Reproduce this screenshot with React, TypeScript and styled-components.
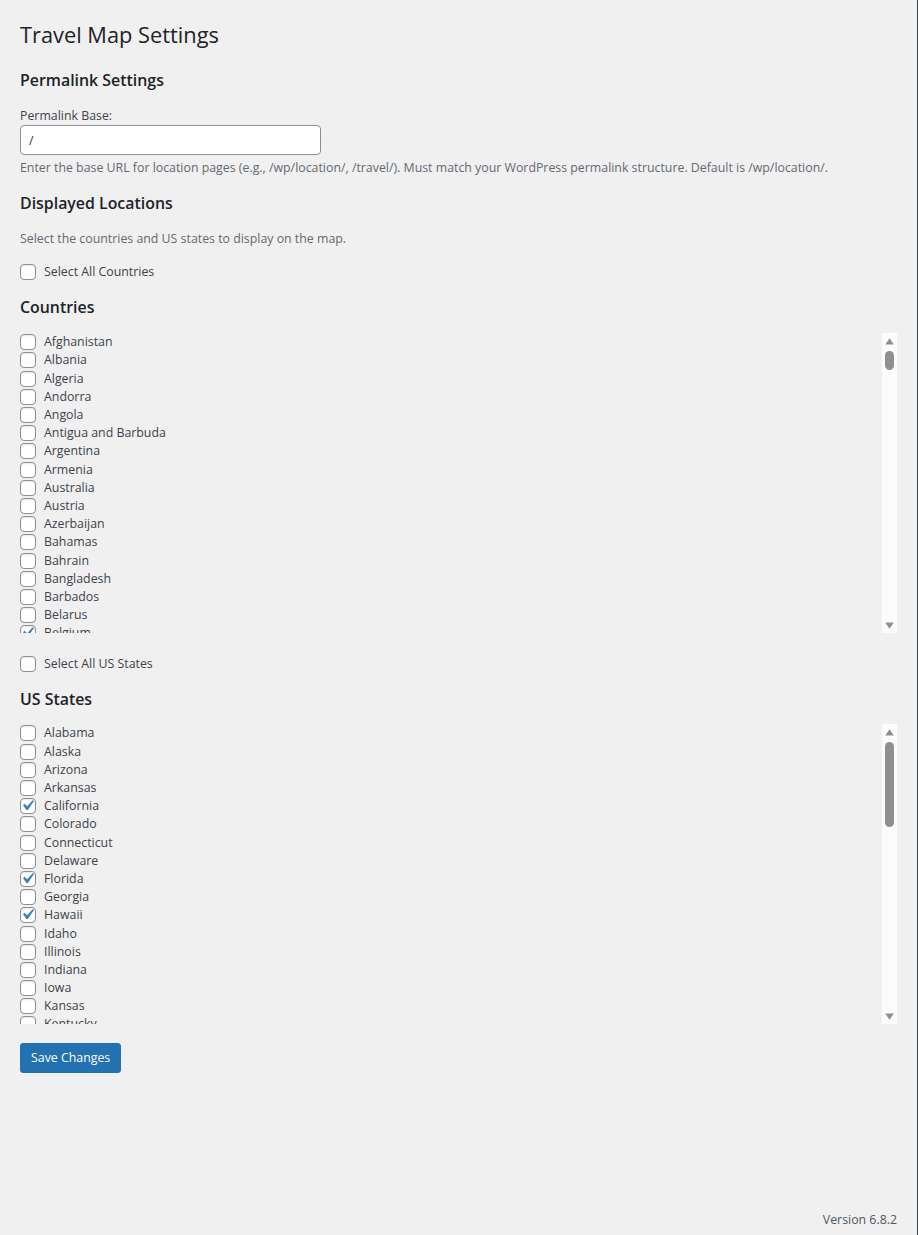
import React from "react";
import styled, { createGlobalStyle } from "styled-components";

const GlobalStyle = createGlobalStyle`
  html, body { margin: 0; padding: 0; }
  body {
    background: #f0f0f1;
    font-family: "Open Sans", "Noto Sans", "Liberation Sans", sans-serif;
    font-size: 12.35px;
    color: #3c434a;
  }
  * { box-sizing: border-box; }
`;

const Page = styled.div`
  width: 918px;
  min-height: 1235px;
  border-right: 1px solid #3c434a;
  display: flex;
  flex-direction: column;
`;

const Wrap = styled.div`
  padding: 20px 20px 0 20px;
  display: flex;
  flex-direction: column;
`;

const Title = styled.h1`
  margin: 0;
  font-size: 21.8px;
  font-weight: 400;
  line-height: 30px;
  color: #1d2327;
`;

const SectionTitle = styled.h2<{ $mt: number }>`
  margin: ${(p) => p.$mt}px 0 0 0;
  font-size: 15.9px;
  font-weight: 600;
  line-height: 24px;
  color: #1d2327;
`;

const FieldLabel = styled.label<{ $mt: number }>`
  display: block;
  margin-top: ${(p) => p.$mt}px;
  line-height: 18px;
  color: #3c434a;
`;

const TextInput = styled.input`
  width: 301px;
  height: 30px;
  border: 1px solid #8c8f94;
  border-radius: 4px;
  background: #fff;
  padding: 0 8px;
  font-family: inherit;
  font-size: 12.35px;
  color: #2c3338;
  outline: none;
`;

const Description = styled.p<{ $mt: number }>`
  margin: ${(p) => p.$mt}px 0 0 0;
  line-height: 18px;
  color: #646970;
`;

const CheckRow = styled.label<{ $mt?: number }>`
  display: flex;
  align-items: center;
  height: 18.2px;
  margin-top: ${(p) => p.$mt ?? 0}px;
  gap: 8px;
  line-height: 18px;
  color: #3c434a;
  white-space: nowrap;
  flex-shrink: 0;
`;

const Box = styled.span`
  position: relative;
  width: 16px;
  height: 16px;
  flex: 0 0 16px;
  border: 1px solid #8c8f94;
  border-radius: 4px;
  background: #fff;
  box-shadow: inset 0 1px 2px rgba(0, 0, 0, 0.1);
`;

const Tick = styled.svg`
  position: absolute;
  left: -4px;
  top: -4px;
  width: 21px;
  height: 21px;
`;

const ScrollBox = styled.div<{ $mt: number }>`
  margin-top: ${(p) => p.$mt}px;
  height: 300px;
  width: 877px;
  display: flex;
`;

const ListColumn = styled.div`
  flex: 1;
  overflow: hidden;
  display: flex;
  flex-direction: column;
`;

const Track = styled.div`
  width: 15px;
  flex: 0 0 15px;
  background: #fcfcfc;
  display: flex;
  flex-direction: column;
`;

const ArrowButton = styled.div<{ $down?: boolean }>`
  height: 15px;
  flex: 0 0 15px;
  display: flex;
  justify-content: center;
  align-items: ${(p) => (p.$down ? "flex-start" : "flex-end")};
  padding: ${(p) => (p.$down ? "4px 0 0" : "0 0 3px")};
`;

const ThumbArea = styled.div`
  flex: 1;
  padding: 3px 3px;
  display: flex;
  flex-direction: column;
`;

const Thumb = styled.div<{ $h: number }>`
  width: 9px;
  height: ${(p) => p.$h}px;
  border-radius: 5px;
  background: #8f8f8f;
`;

const SaveButton = styled.button`
  margin-top: 19px;
  align-self: flex-start;
  height: 30px;
  padding: 0 10px;
  border: 1px solid #2271b1;
  border-radius: 3px;
  background: #2271b1;
  color: #fff;
  font-family: inherit;
  font-size: 12.35px;
  line-height: 28px;
  cursor: pointer;
`;

const Footer = styled.div`
  margin-top: auto;
  padding: 0 20px 6px;
  display: flex;
  justify-content: flex-end;
  line-height: 18px;
  color: #50575e;
`;

const countries = [
  "Afghanistan", "Albania", "Algeria", "Andorra", "Angola", "Antigua and Barbuda", "Argentina", "Armenia",
  "Australia", "Austria", "Azerbaijan", "Bahamas", "Bahrain", "Bangladesh", "Barbados", "Belarus", "Belgium",
  "Belize", "Benin", "Bhutan", "Bolivia", "Bosnia and Herzegovina", "Botswana", "Brazil", "Brunei", "Bulgaria",
  "Burkina Faso", "Burundi", "Cabo Verde", "Cambodia", "Cameroon", "Canada", "Central African Republic", "Chad",
  "Chile", "China", "Colombia", "Comoros", "Congo", "Costa Rica", "Croatia", "Cuba", "Cyprus", "Czech Republic",
  "Denmark", "Djibouti", "Dominica", "Dominican Republic", "Ecuador", "Egypt", "El Salvador", "Equatorial Guinea",
  "Eritrea", "Estonia", "Eswatini", "Ethiopia", "Fiji", "Finland", "France", "Gabon", "Gambia", "Georgia",
  "Germany", "Ghana", "Greece", "Grenada", "Guatemala", "Guinea", "Guinea-Bissau", "Guyana", "Haiti", "Honduras",
  "Hungary", "Iceland", "India", "Indonesia", "Iran", "Iraq", "Ireland", "Israel", "Italy", "Jamaica", "Japan",
  "Jordan", "Kazakhstan", "Kenya", "Kiribati", "Kuwait", "Kyrgyzstan", "Laos", "Latvia", "Lebanon", "Lesotho",
  "Liberia", "Libya", "Liechtenstein", "Lithuania", "Luxembourg", "Madagascar", "Malawi", "Malaysia", "Maldives",
  "Mali", "Malta", "Marshall Islands", "Mauritania", "Mauritius", "Mexico", "Micronesia", "Moldova", "Monaco",
  "Mongolia", "Montenegro", "Morocco", "Mozambique", "Myanmar", "Namibia", "Nauru", "Nepal", "Netherlands",
  "New Zealand", "Nicaragua", "Niger", "Nigeria", "North Korea", "North Macedonia", "Norway", "Oman", "Pakistan",
  "Palau", "Palestine", "Panama", "Papua New Guinea", "Paraguay", "Peru", "Philippines", "Poland", "Portugal",
  "Qatar", "Romania", "Russia", "Rwanda", "Saint Kitts and Nevis", "Saint Lucia", "Saint Vincent and the Grenadines",
  "Samoa", "San Marino", "Sao Tome and Principe", "Saudi Arabia", "Senegal", "Serbia", "Seychelles", "Sierra Leone",
  "Singapore", "Slovakia", "Slovenia", "Solomon Islands", "Somalia", "South Africa", "South Korea", "South Sudan",
  "Spain", "Sri Lanka", "Sudan", "Suriname", "Sweden", "Switzerland", "Syria", "Taiwan", "Tajikistan", "Tanzania",
  "Thailand", "Timor-Leste", "Togo", "Tonga", "Trinidad and Tobago", "Tunisia", "Turkey", "Turkmenistan", "Tuvalu",
  "Uganda", "Ukraine", "United Arab Emirates", "United Kingdom", "United States", "Uruguay", "Uzbekistan",
  "Vanuatu", "Vatican City", "Venezuela", "Vietnam", "Yemen", "Zambia", "Zimbabwe",
];
const checkedCountries = new Set(["Belgium", "France", "Italy", "Japan", "Mexico", "Spain", "United Kingdom", "Canada"]);

const states = [
  "Alabama", "Alaska", "Arizona", "Arkansas", "California", "Colorado", "Connecticut", "Delaware", "Florida",
  "Georgia", "Hawaii", "Idaho", "Illinois", "Indiana", "Iowa", "Kansas", "Kentucky", "Louisiana", "Maine",
  "Maryland", "Massachusetts", "Michigan", "Minnesota", "Mississippi", "Missouri", "Montana", "Nebraska",
  "Nevada", "New Hampshire", "New Jersey", "New Mexico", "New York", "North Carolina", "North Dakota", "Ohio",
  "Oklahoma", "Oregon", "Pennsylvania", "Rhode Island", "South Carolina", "South Dakota", "Tennessee", "Texas",
  "Utah", "Vermont", "Virginia", "Washington", "West Virginia", "Wisconsin", "Wyoming",
];
const checkedStates = new Set(["California", "Florida", "Hawaii", "New York", "Texas"]);

function Check({ label, checked, mt }: { label: string; checked?: boolean; mt?: number }) {
  return (
    <CheckRow $mt={mt}>
      <Box>
        {checked && (
          <Tick viewBox="0 0 20 20">
            <path d="M14.83 4.89l1.34.94-5.81 8.38H9.02L5.78 9.67l1.34-1.25 2.57 2.4z" fill="#3582c4" />
          </Tick>
        )}
      </Box>
      {label}
    </CheckRow>
  );
}

const ROW = 18.2;
const VIEW = 300;
const TRACK_INNER = VIEW - 30 - 6;

function Scroller({ items, checked, mt }: { items: string[]; checked: Set<string>; mt: number }) {
  const thumb = Math.max(18, Math.round(((VIEW - 30) * VIEW) / (items.length * ROW)) - 4);
  return (
    <ScrollBox $mt={mt}>
      <ListColumn>
        {items.map((c) => (
          <Check key={c} label={c} checked={checked.has(c)} />
        ))}
      </ListColumn>
      <Track>
        <ArrowButton>
          <svg width="9" height="7" viewBox="0 0 9 7">
            <path d="M4.5 0.3 L8.8 6.6 H0.2 Z" fill="#8f8f8f" />
          </svg>
        </ArrowButton>
        <ThumbArea>
          <Thumb $h={Math.min(thumb, TRACK_INNER)} />
        </ThumbArea>
        <ArrowButton $down>
          <svg width="9" height="7" viewBox="0 0 9 7">
            <path d="M0.2 0.4 H8.8 L4.5 6.7 Z" fill="#8f8f8f" />
          </svg>
        </ArrowButton>
      </Track>
    </ScrollBox>
  );
}

export default function App() {
  return (
    <>
      <GlobalStyle />
      <Page>
        <Wrap>
          <Title>Travel Map Settings</Title>
          <SectionTitle $mt={18}>Permalink Settings</SectionTitle>
          <FieldLabel $mt={15}>Permalink Base:</FieldLabel>
          <TextInput defaultValue="/" />
          <Description $mt={4}>
            Enter the base URL for location pages (e.g., /wp/location/, /travel/). Must match your WordPress permalink
            structure. Default is /wp/location/.
          </Description>
          <SectionTitle $mt={14}>Displayed Locations</SectionTitle>
          <Description $mt={15}>Select the countries and US states to display on the map.</Description>
          <Check label="Select All Countries" mt={15} />
          <SectionTitle $mt={14}>Countries</SectionTitle>
          <Scroller items={countries} checked={checkedCountries} mt={14} />
          <Check label="Select All US States" mt={22} />
          <SectionTitle $mt={14}>US States</SectionTitle>
          <Scroller items={states} checked={checkedStates} mt={13} />
          <SaveButton>Save Changes</SaveButton>
        </Wrap>
        <Footer>Version 6.8.2</Footer>
      </Page>
    </>
  );
}
